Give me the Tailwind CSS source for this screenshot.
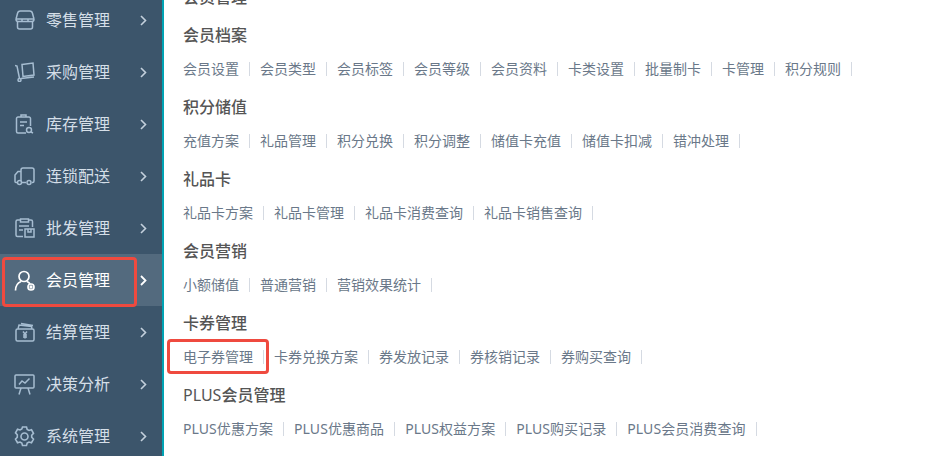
<!DOCTYPE html>
<html lang="zh"><head><meta charset="utf-8"><script src="https://cdn.jsdelivr.net/npm/@tailwindcss/browser@4"></script></head>
<body class="m-0 overflow-hidden bg-white">
<div class="relative flex h-[456px] w-[933px] overflow-hidden font-['Noto_Sans','Noto_Sans_CJK_SC',sans-serif]">
<aside class="h-full w-[164px] shrink-0 overflow-hidden border-r-2 border-[#00a3b4] bg-[#3c556b]">
<nav class="-mt-[6px] text-[16px] text-[#d5dfe8]">
<a class="flex h-[52px] items-center"><svg class="ml-[15px] h-[20px] w-[20px] text-[#a6bdd1]" viewBox="0 0 20 20" fill="none" stroke="currentColor" stroke-width="1.500"><path d="M1 9 2.500 3.500A3 3 0 0 1 5.500 1h9a3 3 0 0 1 3 2.500L19 9M1 9h18M1 9c0 1.500 1 2.500 2 2.500h14c1 0 2-1 2-2.500M7 9v2.500M13 9v2.500M2.500 11.500V17A2 2 0 0 0 4.500 19h11a2 2 0 0 0 2-2v-5.500"/></svg><span class="ml-[11px] w-[94px]">零售管理</span><svg class="h-[11px] w-[7px] text-[#c3d0dc]" viewBox="0 0 7 11" fill="none" stroke="currentColor" stroke-width="1.600"><path d="M1 1l4.500 4.500L1 10"/></svg></a>
<a class="flex h-[52px] items-center"><svg class="ml-[15px] h-[20px] w-[20px] text-[#a6bdd1]" viewBox="0 0 20 20" fill="none" stroke="currentColor" stroke-width="1.500"><path d="M0 3.500 2 4l2.500 12.500M7 2.500 18 1l1 12-11 1.500zM6 16.500 19 15"/><circle cx="4.500" cy="18" r="1.500"/></svg><span class="ml-[11px] w-[94px]">采购管理</span><svg class="h-[11px] w-[7px] text-[#c3d0dc]" viewBox="0 0 7 11" fill="none" stroke="currentColor" stroke-width="1.600"><path d="M1 1l4.500 4.500L1 10"/></svg></a>
<a class="flex h-[52px] items-center"><svg class="ml-[15px] h-[20px] w-[20px] text-[#a6bdd1]" viewBox="0 0 20 20" fill="none" stroke="currentColor" stroke-width="1.500"><path d="M11 19H3a1.500 1.500 0 0 1-1.500-1.500v-13A1.500 1.500 0 0 1 3 3h11a1.500 1.500 0 0 1 1.500 1.500V12M6 3V1h5v2M5 8h7M5 11.500h4"/><circle cx="14" cy="16" r="2.500"/><path d="m16 18 2 1"/></svg><span class="ml-[11px] w-[94px]">库存管理</span><svg class="h-[11px] w-[7px] text-[#c3d0dc]" viewBox="0 0 7 11" fill="none" stroke="currentColor" stroke-width="1.600"><path d="M1 1l4.500 4.500L1 10"/></svg></a>
<a class="flex h-[52px] items-center"><svg class="ml-[14px] h-[20px] w-[21px] text-[#a6bdd1]" viewBox="0 0 21 20" fill="none" stroke="currentColor" stroke-width="1.500"><path d="M7 15V4a2 2 0 0 1 2-2h9a2 2 0 0 1 2 2v11a1.500 1.500 0 0 1-1.500 1.500H18M12 16.500H8M3 16.500H2a1 1 0 0 1-1-1V9l3-3.500h3"/><circle cx="5.500" cy="16.500" r="2"/><circle cx="15" cy="16.500" r="2"/></svg><span class="ml-[11px] w-[94px]">连锁配送</span><svg class="h-[11px] w-[7px] text-[#c3d0dc]" viewBox="0 0 7 11" fill="none" stroke="currentColor" stroke-width="1.600"><path d="M1 1l4.500 4.500L1 10"/></svg></a>
<a class="flex h-[52px] items-center"><svg class="ml-[15px] h-[20px] w-[20px] text-[#a6bdd1]" viewBox="0 0 20 20" fill="none" stroke="currentColor" stroke-width="1.500"><path d="M8 18.500H2.500A1.500 1.500 0 0 1 1 17V3.500A1.500 1.500 0 0 1 2.500 2H5M14 2h2A1.500 1.500 0 0 1 17.500 3.500V9M5.500 1h8v3h-8zM4 8h10M4 12h4M10 11h9v8h-9zM13 11v3h3v-3"/></svg><span class="ml-[11px] w-[94px]">批发管理</span><svg class="h-[11px] w-[7px] text-[#c3d0dc]" viewBox="0 0 7 11" fill="none" stroke="currentColor" stroke-width="1.600"><path d="M1 1l4.500 4.500L1 10"/></svg></a>
<a class="flex h-[52px] items-center bg-[#536a7e] text-white"><svg class="ml-[14px] h-[21px] w-[21px] text-white" viewBox="0 0 21 21" fill="none" stroke="currentColor" stroke-width="1.700"><circle cx="10" cy="6.500" r="5"/><path d="M1.500 20.500C1.500 16 3.500 13 7 11.500M13 11.500c1.500.7 2.500 1.500 3 2.500"/><circle cx="17" cy="17" r="3"/><circle cx="17" cy="17" r=".8" fill="currentColor"/></svg><span class="ml-[11px] w-[94px]">会员管理</span><svg class="h-[11px] w-[7px] text-white" viewBox="0 0 7 11" fill="none" stroke="currentColor" stroke-width="1.800"><path d="M1 1l4.500 4.500L1 10"/></svg></a>
<a class="flex h-[52px] items-center"><svg class="ml-[15px] h-[20px] w-[20px] text-[#a6bdd1]" viewBox="0 0 20 20" fill="none" stroke="currentColor" stroke-width="1.500"><path d="M2.500 7h15A1.500 1.500 0 0 1 19 8.500v9a1.500 1.500 0 0 1-1.500 1.500h-15A1.500 1.500 0 0 1 1 17.500v-9A1.500 1.500 0 0 1 2.500 7zM3 7 4 3l12.500 1.500L17 7M6 1.500l12 2M8 9.500l2 2.500 2-2.500M10 12v4.500M8 13h4M8 15h4"/></svg><span class="ml-[11px] w-[94px]">结算管理</span><svg class="h-[11px] w-[7px] text-[#c3d0dc]" viewBox="0 0 7 11" fill="none" stroke="currentColor" stroke-width="1.600"><path d="M1 1l4.500 4.500L1 10"/></svg></a>
<a class="flex h-[52px] items-center"><svg class="ml-[14px] h-[21px] w-[21px] text-[#a6bdd1]" viewBox="0 0 21 21" fill="none" stroke="currentColor" stroke-width="1.500"><path d="M2 1h17a1 1 0 0 1 1 1v11a1 1 0 0 1-1 1H2a1 1 0 0 1-1-1V2a1 1 0 0 1 1-1zM7 14l-2 6.500M14 14l2 6.500M5 10.500l3-3.500 3 2 4.500-4.500"/></svg><span class="ml-[11px] w-[94px]">决策分析</span><svg class="h-[11px] w-[7px] text-[#c3d0dc]" viewBox="0 0 7 11" fill="none" stroke="currentColor" stroke-width="1.600"><path d="M1 1l4.500 4.500L1 10"/></svg></a>
<a class="flex h-[52px] items-center"><svg class="ml-[14px] h-[21px] w-[21px] text-[#a6bdd1]" viewBox="0 0 21 21" fill="none" stroke="currentColor" stroke-width="1.600"><path d="M8.500 1h4l.7 2.500 1.800 1 2.500-.7 2 3.500-1.800 1.900v2.100l1.800 1.900-2 3.500-2.500-.7-1.800 1-.7 2.500h-4l-.7-2.500-1.800-1-2.500.7-2-3.500 1.800-1.900V8.700L1.500 6.800l2-3.500 2.500.7 1.800-1z"/><circle cx="10.500" cy="10.500" r="3.500"/></svg><span class="ml-[11px] w-[94px]">系统管理</span><svg class="h-[11px] w-[7px] text-[#c3d0dc]" viewBox="0 0 7 11" fill="none" stroke="currentColor" stroke-width="1.600"><path d="M1 1l4.500 4.500L1 10"/></svg></a>
</nav>
</aside>
<main class="-mt-[19px] flex-1 pl-[19px] text-[#6a7889]">
<h2 class="mb-[6px] h-[32px] text-[16px] leading-[32px] font-medium text-[#555]">会员管理</h2>
<h3 class="h-[32px] text-[16px] leading-[32px] font-medium text-[#555]">会员档案</h3>
<ul class="mb-[4px] flex h-[36px] items-center text-[14px] leading-[14px]"><li class="mr-[10px] border-r border-[#d5dae2] pr-[10px]">会员设置</li><li class="mr-[10px] border-r border-[#d5dae2] pr-[10px]">会员类型</li><li class="mr-[10px] border-r border-[#d5dae2] pr-[10px]">会员标签</li><li class="mr-[10px] border-r border-[#d5dae2] pr-[10px]">会员等级</li><li class="mr-[10px] border-r border-[#d5dae2] pr-[10px]">会员资料</li><li class="mr-[10px] border-r border-[#d5dae2] pr-[10px]">卡类设置</li><li class="mr-[10px] border-r border-[#d5dae2] pr-[10px]">批量制卡</li><li class="mr-[10px] border-r border-[#d5dae2] pr-[10px]">卡管理</li><li class="mr-[10px] border-r border-[#d5dae2] pr-[10px]">积分规则</li></ul>
<h3 class="h-[32px] text-[16px] leading-[32px] font-medium text-[#555]">积分储值</h3>
<ul class="mb-[4px] flex h-[36px] items-center text-[14px] leading-[14px]"><li class="mr-[10px] border-r border-[#d5dae2] pr-[10px]">充值方案</li><li class="mr-[10px] border-r border-[#d5dae2] pr-[10px]">礼品管理</li><li class="mr-[10px] border-r border-[#d5dae2] pr-[10px]">积分兑换</li><li class="mr-[10px] border-r border-[#d5dae2] pr-[10px]">积分调整</li><li class="mr-[10px] border-r border-[#d5dae2] pr-[10px]">储值卡充值</li><li class="mr-[10px] border-r border-[#d5dae2] pr-[10px]">储值卡扣减</li><li class="mr-[10px] border-r border-[#d5dae2] pr-[10px]">错冲处理</li></ul>
<h3 class="h-[32px] text-[16px] leading-[32px] font-medium text-[#555]">礼品卡</h3>
<ul class="mb-[4px] flex h-[36px] items-center text-[14px] leading-[14px]"><li class="mr-[10px] border-r border-[#d5dae2] pr-[10px]">礼品卡方案</li><li class="mr-[10px] border-r border-[#d5dae2] pr-[10px]">礼品卡管理</li><li class="mr-[10px] border-r border-[#d5dae2] pr-[10px]">礼品卡消费查询</li><li class="mr-[10px] border-r border-[#d5dae2] pr-[10px]">礼品卡销售查询</li></ul>
<h3 class="h-[32px] text-[16px] leading-[32px] font-medium text-[#555]">会员营销</h3>
<ul class="mb-[4px] flex h-[36px] items-center text-[14px] leading-[14px]"><li class="mr-[10px] border-r border-[#d5dae2] pr-[10px]">小额储值</li><li class="mr-[10px] border-r border-[#d5dae2] pr-[10px]">普通营销</li><li class="mr-[10px] border-r border-[#d5dae2] pr-[10px]">营销效果统计</li></ul>
<h3 class="h-[32px] text-[16px] leading-[32px] font-medium text-[#555]">卡券管理</h3>
<ul class="mb-[4px] flex h-[36px] items-center text-[14px] leading-[14px]"><li class="mr-[10px] border-r border-[#d5dae2] pr-[10px]">电子券管理</li><li class="mr-[10px] border-r border-[#d5dae2] pr-[10px]">卡券兑换方案</li><li class="mr-[10px] border-r border-[#d5dae2] pr-[10px]">券发放记录</li><li class="mr-[10px] border-r border-[#d5dae2] pr-[10px]">券核销记录</li><li class="mr-[10px] border-r border-[#d5dae2] pr-[10px]">券购买查询</li></ul>
<h3 class="h-[32px] text-[16px] leading-[32px] font-normal text-[#555]">PLUS<span class="font-medium">会员管理</span></h3>
<ul class="mb-[4px] flex h-[36px] items-center text-[14px] leading-[14px] tracking-[0.06px]"><li class="mr-[10px] border-r border-[#d5dae2] pr-[10px]">PLUS优惠方案</li><li class="mr-[10px] border-r border-[#d5dae2] pr-[10px]">PLUS优惠商品</li><li class="mr-[10px] border-r border-[#d5dae2] pr-[10px]">PLUS权益方案</li><li class="mr-[10px] border-r border-[#d5dae2] pr-[10px]">PLUS购买记录</li><li class="mr-[10px] border-r border-[#d5dae2] pr-[10px]">PLUS会员消费查询</li></ul>
</main>
<div class="absolute left-[2px] top-[257px] h-[50px] w-[135px] rounded-[4px] border-[3px] border-[#ef4a3f]"></div>
<div class="absolute left-[167px] top-[339px] h-[35px] w-[102px] rounded-[4px] border-[3px] border-[#ef4a3f]"></div>
</div>
</body></html>
